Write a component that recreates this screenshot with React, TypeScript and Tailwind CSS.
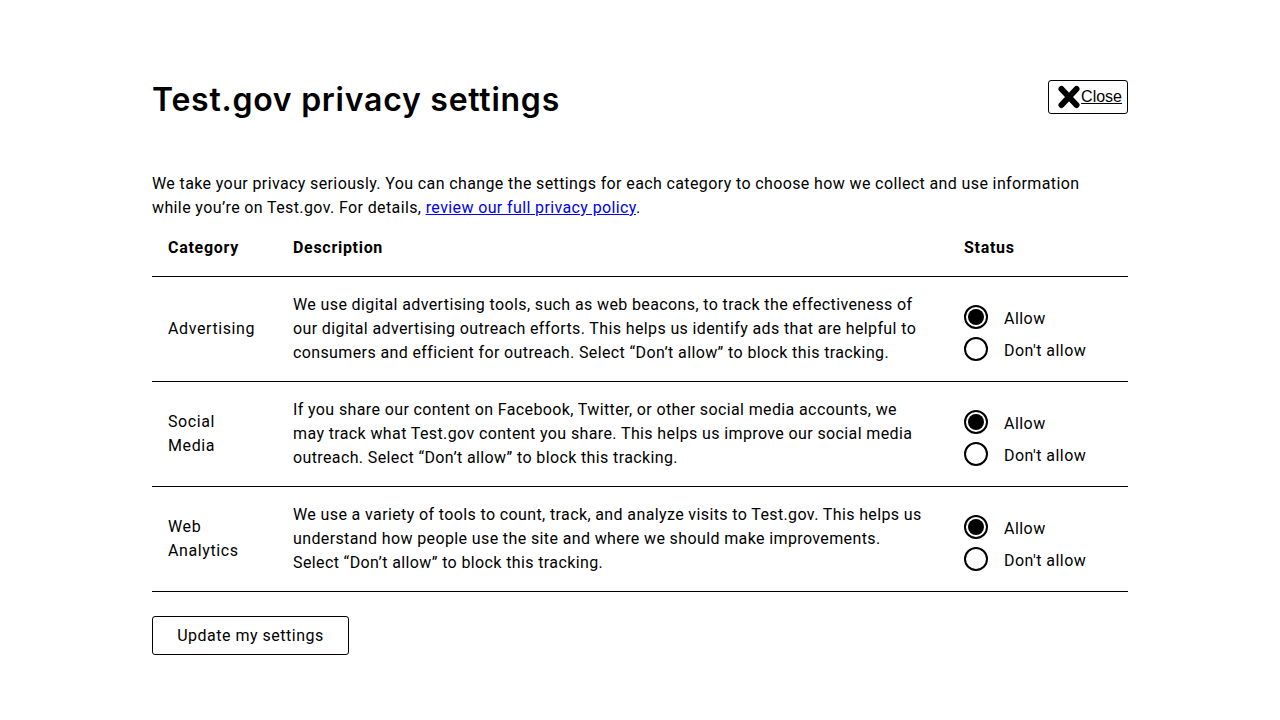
import { useState } from 'react';

type Choice = 'allow' | 'deny';

interface Row {
  id: string;
  label: string[];
  lines: string[];
}

const ROWS: Row[] = [
  {
    id: 'advertising',
    label: ['Advertising'],
    lines: [
      'We use digital advertising tools, such as web beacons, to track the effectiveness of',
      'our digital advertising outreach efforts. This helps us identify ads that are helpful to',
      'consumers and efficient for outreach. Select \u201cDon\u2019t allow\u201d to block this tracking.',
    ],
  },
  {
    id: 'social',
    label: ['Social', 'Media'],
    lines: [
      'If you share our content on Facebook, Twitter, or other social media accounts, we',
      'may track what Test.gov content you share. This helps us improve our social media',
      'outreach. Select \u201cDon\u2019t allow\u201d to block this tracking.',
    ],
  },
  {
    id: 'analytics',
    label: ['Web', 'Analytics'],
    lines: [
      'We use a variety of tools to count, track, and analyze visits to Test.gov. This helps us',
      'understand how people use the site and where we should make improvements.',
      'Select \u201cDon\u2019t allow\u201d to block this tracking.',
    ],
  },
];

function Radio({ checked, label, onClick }: { checked: boolean; label: string; onClick: () => void }) {
  return (
    <button onClick={onClick} className="flex items-center gap-4 h-8 text-left">
      <span className="w-6 h-6 rounded-full border-2 border-black flex items-center justify-center">
        {checked && <span className="w-4 h-4 rounded-full bg-black" />}
      </span>
      <span className="pt-[3px] tracking-[0.45px]">{label}</span>
    </button>
  );
}

export default function App() {
  const [choices, setChoices] = useState<Record<string, Choice>>({
    advertising: 'allow',
    social: 'allow',
    analytics: 'allow',
  });

  return (
    <div className="min-h-screen bg-white text-black font-['Roboto',sans-serif] text-base leading-6">
      <div className="w-[976px] mx-auto pt-20">
        {/* Header */}
        <div className="flex items-start justify-between">
          <h1 className="font-['Inter',sans-serif] font-semibold text-[32px] leading-10 tracking-[0.75px]">
            Test.gov privacy settings
          </h1>
          <button className="flex items-center h-[34px] pl-[8px] pr-[5px] border border-black rounded-[3px] font-['Liberation_Sans',Arial,sans-serif]">
            <svg width="24" height="24" viewBox="0 0 24 24">
              <path d="M4.5 4 L19.5 20 M19.5 4 L4.5 20" stroke="black" strokeWidth="6" strokeLinecap="round" />
            </svg>
            <span className="underline">Close</span>
          </button>
        </div>

        <p className="mt-[52px] tracking-[0.38px]">
          We take your privacy seriously. You can change the settings for each category to choose how we collect and use information
          <br />
          while you&rsquo;re on Test.gov. For details,{' '}
          <a href="#" className="text-[#0000ee] underline">
            review our full privacy policy
          </a>
          .
        </p>

        <table className="w-full table-fixed border-collapse">
          <colgroup>
            <col className="w-[125px]" />
            <col className="w-[671px]" />
            <col className="w-[180px]" />
          </colgroup>
          <thead>
            <tr className="border-b border-black">
              <th className="text-left font-bold px-4 py-4 tracking-[0.7px]">Category</th>
              <th className="text-left font-bold px-4 py-4 tracking-[0.7px]">Description</th>
              <th className="text-left font-bold px-4 py-4 tracking-[0.7px]">Status</th>
            </tr>
          </thead>
          <tbody>
            {ROWS.map((r) => (
              <tr key={r.id} className="border-b border-black">
                <td className="px-4 py-4 align-middle tracking-[0.6px]">
                  {r.label.map((l) => (
                    <div key={l}>{l}</div>
                  ))}
                </td>
                <td className="px-4 py-4 align-middle tracking-[0.38px] whitespace-nowrap">
                  {r.lines.map((l) => (
                    <div key={l}>{l}</div>
                  ))}
                </td>
                <td className="px-4 pt-[24px] pb-[16px] align-middle">
                  <Radio
                    checked={choices[r.id] === 'allow'}
                    label="Allow"
                    onClick={() => setChoices({ ...choices, [r.id]: 'allow' })}
                  />
                  <Radio
                    checked={choices[r.id] === 'deny'}
                    label="Don't allow"
                    onClick={() => setChoices({ ...choices, [r.id]: 'deny' })}
                  />
                </td>
              </tr>
            ))}
          </tbody>
        </table>

        <button className="mt-6 w-[197px] h-[39px] border border-black rounded-[3px] tracking-[0.5px]">
          Update my settings
        </button>
      </div>
    </div>
  );
}
